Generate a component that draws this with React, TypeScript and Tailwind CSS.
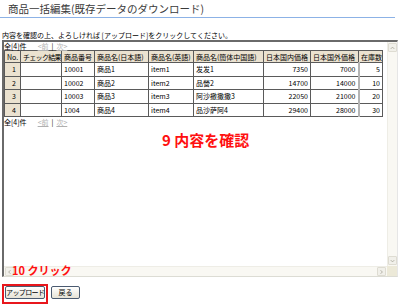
import React from 'react';

type Row = {
  no: number;
  code: string;
  ja: string;
  en: string;
  zh: string;
  domestic: number;
  overseas: number;
  stock: number;
};

const rows: Row[] = [
  { no: 1, code: '10001', ja: '商品1', en: 'item1', zh: '发发1', domestic: 7350, overseas: 7000, stock: 5 },
  { no: 2, code: '10002', ja: '商品2', en: 'item2', zh: '品營2', domestic: 14700, overseas: 14000, stock: 10 },
  { no: 3, code: '10003', ja: '商品3', en: 'item3', zh: '阿沙撤撒撒3', domestic: 22050, overseas: 21000, stock: 20 },
  { no: 4, code: '1004', ja: '商品4', en: 'item4', zh: '品沙萨阿4', domestic: 29400, overseas: 28000, stock: 30 },
];

const headers = [
  'No.',
  'チェック結果',
  '商品番号',
  '商品名(日本語)',
  '商品名(英語)',
  '商品名(簡体中国語)',
  '日本国内価格',
  '日本国外価格',
  '在庫数',
];

const widths = [16, 41, 33, 54, 45, 70, 47, 48, 24];

const Pager: React.FC = () => (
  <div className="h-[8px] leading-[8px] text-[7px] text-black whitespace-nowrap flex">
    <span>全[4]件</span>
    <span className="ml-[11px] text-[#b0b0b0] underline">&lt;前</span>
    <span className="mx-[3px]">|</span>
    <span className="text-[#b0b0b0] underline">次&gt;</span>
  </div>
);

const Arrow: React.FC<{ dir: 'up' | 'down' | 'left' | 'right' }> = ({ dir }) => {
  const d = {
    up: 'M2 5 L4 3 L6 5',
    down: 'M2 3 L4 5 L6 3',
    left: 'M5 2 L3 4 L5 6',
    right: 'M3 2 L5 4 L3 6',
  }[dir];
  return (
    <div className="w-[9px] h-[9px] bg-[#f1f0ea] border border-[#dedcd2] rounded-[1px] flex items-center justify-center">
      <svg width="8" height="8" viewBox="0 0 8 8">
        <path d={d} fill="none" stroke="#a9a79c" strokeWidth="1" />
      </svg>
    </div>
  );
};

const cell = 'border border-[#5a5a5a] px-[2px] whitespace-nowrap overflow-hidden';

export default function App() {
  return (
    <div className="relative w-[400px] h-[306px] bg-white overflow-hidden font-['Noto_Sans_CJK_JP',sans-serif] text-black">
      {/* Title */}
      <div className="h-[17px] pl-[8px] pt-[2px] text-[10.5px] leading-[14px] text-[#3a3a3a] whitespace-nowrap">
        商品一括編集(既存データのダウンロード)
      </div>
      <div className="w-[395px] h-[1px] bg-[#8cb2e6]" />

      <div className="mt-[12px] h-[10px] pl-[2px] text-[7px] leading-[10px] whitespace-nowrap">
        内容を確認の上、よろしければ [アップロード]をクリックしてください。
      </div>

      {/* Scroll frame */}
      <div className="ml-[2px] w-[396px] h-[237px] border-t-2 border-l-2 border-r border-b border-t-[#6a6a6a] border-l-[#6a6a6a] border-r-[#e6e6e6] border-b-[#dcdcd4] flex flex-col">
        <div className="flex-1 flex min-h-0">
          <div className="flex-1 bg-white">
            <Pager />
            <table className="table-fixed border-collapse text-[7px] leading-[8px]" style={{ width: 378 }}>
              <colgroup>
                {widths.map((w, i) => (
                  <col key={i} style={{ width: w }} />
                ))}
              </colgroup>
              <thead>
                <tr className="h-[12px] bg-[#ebe2d0]">
                  {headers.map((h, i) => (
                    <th
                      key={h}
                      className={`${cell} font-normal text-left ${i === 1 ? 'px-[1px] tracking-[-0.7px]' : ''}`}
                    >
                      {h}
                    </th>
                  ))}
                </tr>
              </thead>
              <tbody>
                {rows.map(r => (
                  <tr key={r.no} className="h-[13.5px]">
                    <td className={`${cell} bg-[#ebe2d0] text-right pr-[4px]`}>{r.no}</td>
                    <td className={cell}></td>
                    <td className={cell}>{r.code}</td>
                    <td className={cell}>{r.ja}</td>
                    <td className={cell}>{r.en}</td>
                    <td className={cell}>{r.zh}</td>
                    <td className={`${cell} text-right`}>{r.domestic}</td>
                    <td className={`${cell} text-right`}>{r.overseas}</td>
                    <td className={`${cell} text-right border-l-2 border-l-[#b4b4b4]`}>{r.stock}</td>
                  </tr>
                ))}
              </tbody>
            </table>
            <div className="mt-[1px]">
              <Pager />
            </div>
          </div>
          {/* vertical scrollbar */}
          <div className="w-[10px] bg-[#f9f8f3] border-l border-[#eeede6] flex flex-col justify-between items-center py-[1px]">
            <Arrow dir="up" />
            <Arrow dir="down" />
          </div>
        </div>
        {/* horizontal scrollbar */}
        <div className="h-[10px] flex">
          <div className="flex-1 bg-[#f9f8f3] border-t border-[#eeede6] flex justify-between items-center px-[1px]">
            <Arrow dir="left" />
            <Arrow dir="right" />
          </div>
          <div className="w-[10px] bg-[#ece9d8]" />
        </div>
      </div>

      {/* Buttons */}
      <div className="mt-[9px] ml-[5px] flex gap-[6px]">
        <button className="w-[40px] h-[13px] px-0 rounded-[2px] border border-[#4a5a70] bg-gradient-to-b from-white to-[#e6e3d6] text-[7px] leading-[11px] tracking-[-0.6px] whitespace-nowrap text-black">
          アップロード
        </button>
        <button className="w-[29px] h-[13px] px-0 rounded-[2px] border border-[#4a5a70] bg-gradient-to-b from-white to-[#e6e3d6] text-[7px] leading-[11px] text-black">
          戻る
        </button>
      </div>

      {/* Annotations */}
      <div className="absolute left-[2px] top-[284px] w-[46px] h-[20px] border-2 border-[#e8161c]" />
      <div className="absolute left-[162px] top-[130px] text-[15px] leading-[19px] font-bold text-[#ff1010] whitespace-nowrap">
        9 内容を確認
      </div>
      <div className="absolute left-[12px] top-[263px] text-[11px] leading-[15px] font-semibold text-[#ff1010] whitespace-nowrap">
        10 クリック
      </div>
    </div>
  );
}
